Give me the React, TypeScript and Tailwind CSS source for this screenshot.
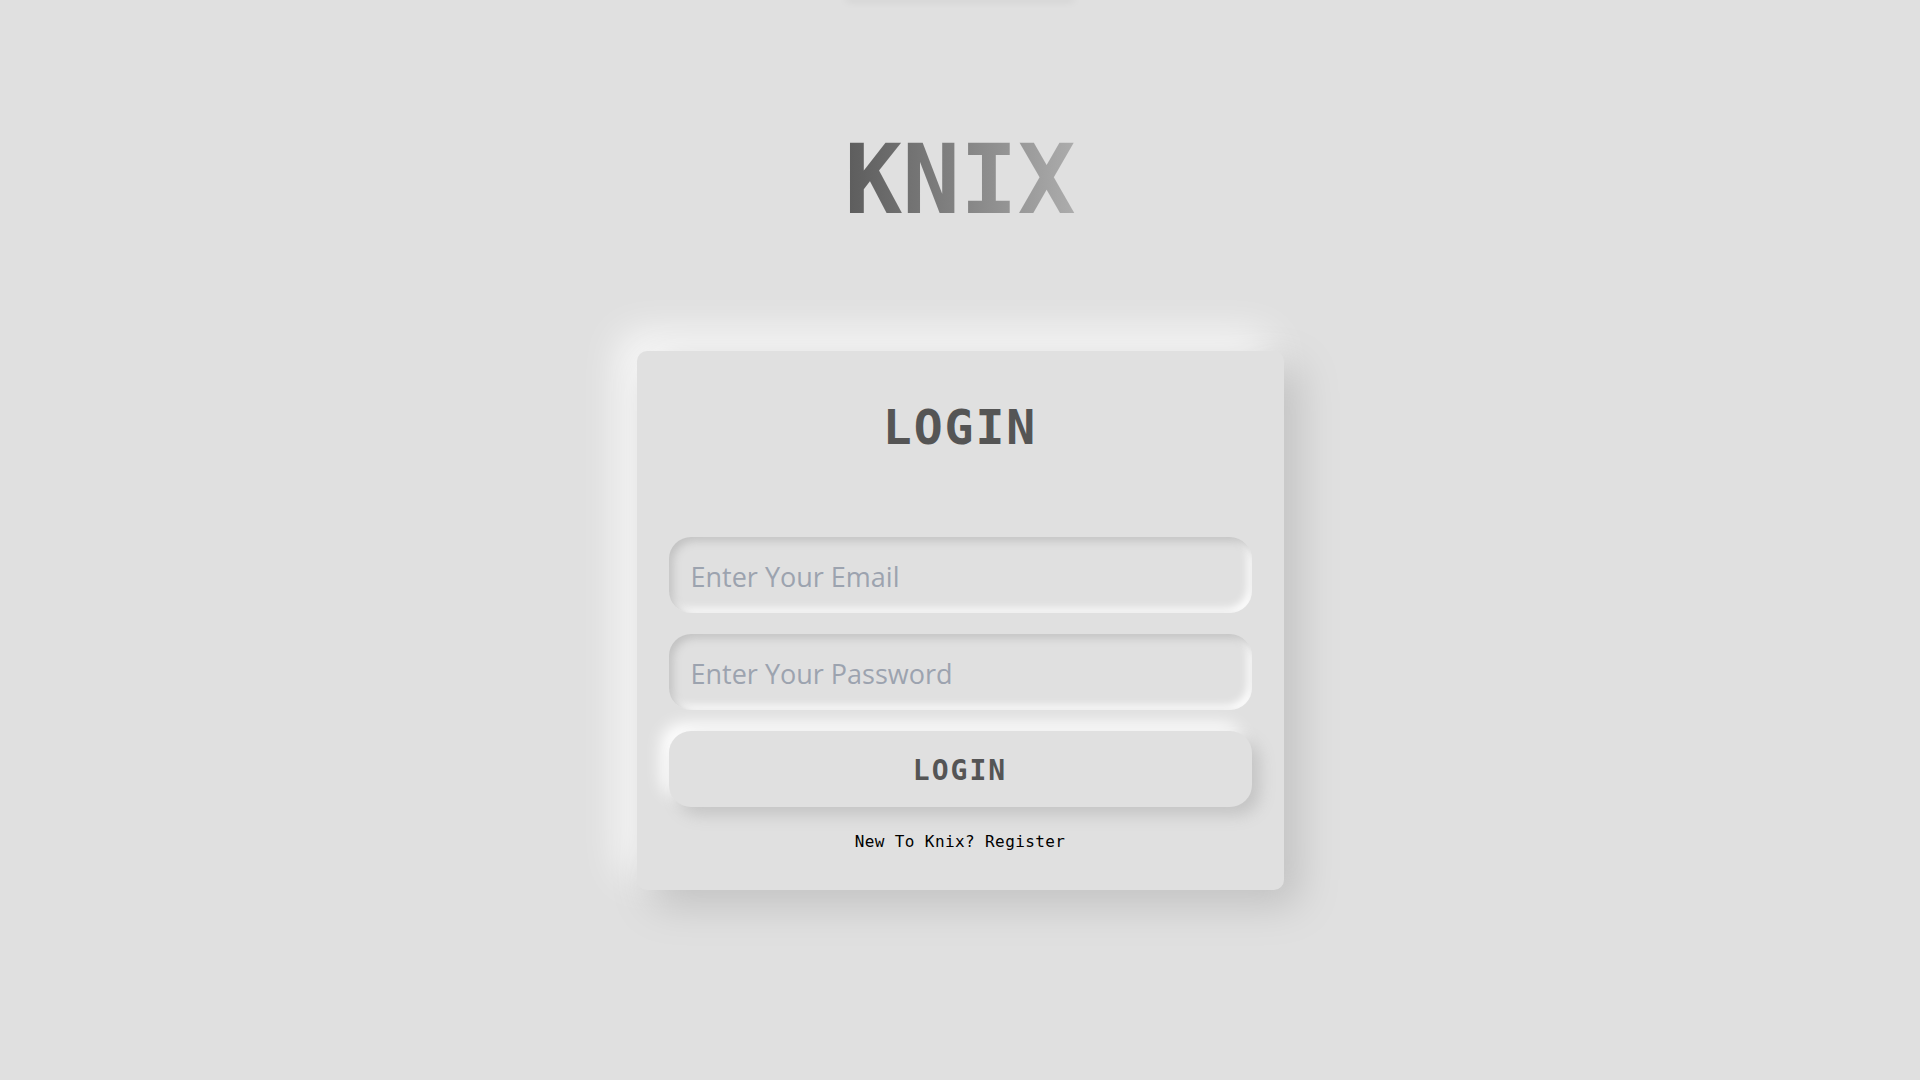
import { useState } from 'react'

const mono = "font-['DejaVu_Sans_Mono','Liberation_Mono',monospace]"

export default function App() {
  const [email, setEmail] = useState('')
  const [password, setPassword] = useState('')

  return (
    <div className="flex min-h-screen flex-col items-center bg-[#e0e0e0]">
      <div className="h-[2px] w-[228px] -translate-y-[2px] shadow-[0_0_8px_rgba(0,0,0,0.18)]" />

      <h1
        className={`${mono} mt-[130px] inline-block bg-linear-to-r from-[#5c5c5c] to-[#adadad] bg-clip-text text-[96px] leading-none font-bold text-transparent`}
      >
        KNIX
      </h1>

      <form
        onSubmit={(e) => e.preventDefault()}
        className="mt-[123px] flex w-[647px] flex-col rounded-[10px] bg-[#e0e0e0] px-8 pt-[52px] pb-10 shadow-[15px_15px_40px_#c0c0c0,-15px_-15px_40px_#ffffff]"
      >
        <h2 className={`${mono} text-center text-[48px] leading-none font-bold tracking-[2px] text-[#555555]`}>
          LOGIN
        </h2>

        <div className="mt-[86px] flex flex-col gap-[21px]">
          <input
            type="email"
            value={email}
            onChange={(e) => setEmail(e.target.value)}
            placeholder="Enter Your Email"
            className="h-[76px] w-full rounded-[22px] bg-transparent pt-[2px] pl-[22px] font-['Open_Sans','Noto_Sans',sans-serif] text-[27px] text-[#444] shadow-[inset_4px_4px_8px_#c2c2c2,inset_-4px_-4px_8px_#ffffff] outline-none placeholder:text-[#9ca3af]"
          />
          <input
            type="password"
            value={password}
            onChange={(e) => setPassword(e.target.value)}
            placeholder="Enter Your Password"
            className="h-[76px] w-full rounded-[22px] bg-transparent pt-[2px] pl-[22px] font-['Open_Sans','Noto_Sans',sans-serif] text-[27px] text-[#444] shadow-[inset_4px_4px_8px_#c2c2c2,inset_-4px_-4px_8px_#ffffff] outline-none placeholder:text-[#9ca3af]"
          />
          <button
            type="submit"
            className={`${mono} h-[76px] w-full rounded-[22px] bg-[#e0e0e0] pt-1 text-[28px] font-bold tracking-[2px] text-[#555555] shadow-[8px_8px_16px_#c4c4c4,-8px_-8px_16px_#ffffff]`}
          >
            LOGIN
          </button>
        </div>

        <p className={`${mono} mt-[27px] text-center text-[16px] leading-none tracking-[0.4px] text-black`}>
          New To Knix? Register
        </p>
      </form>
    </div>
  )
}
